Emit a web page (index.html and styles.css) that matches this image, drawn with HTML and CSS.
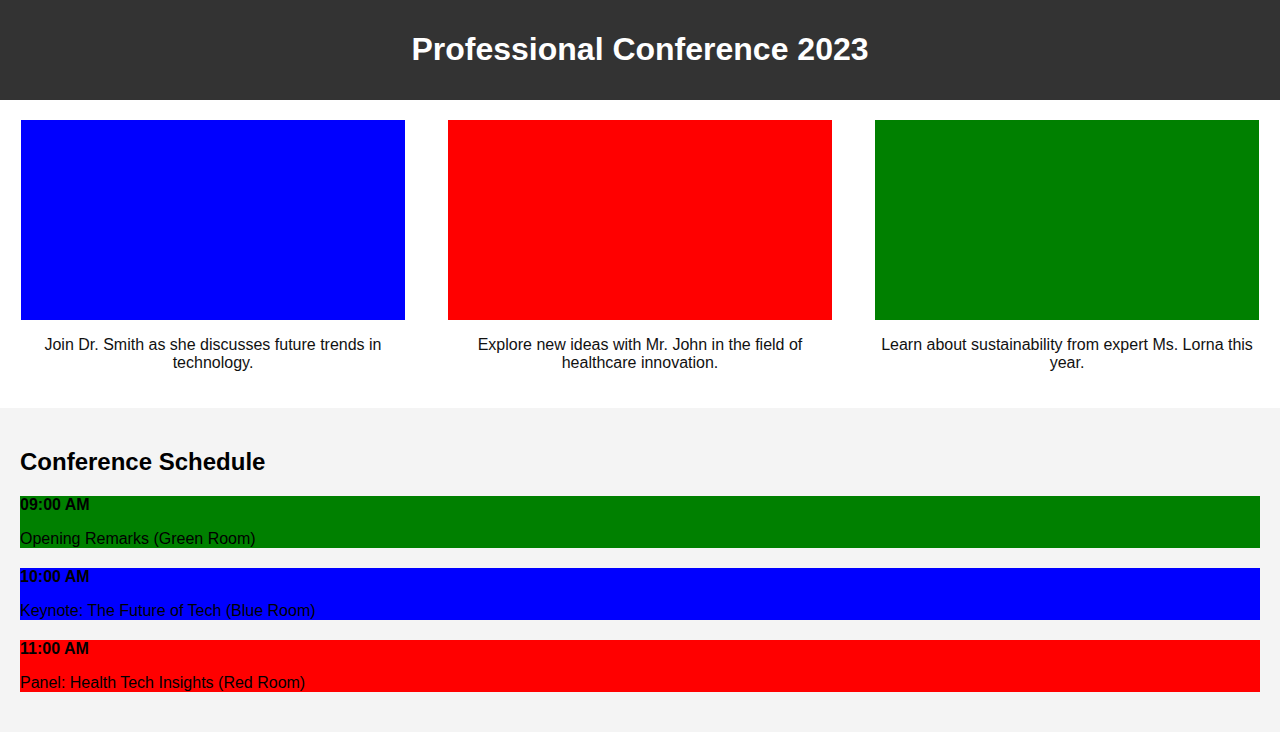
FILE: index.html
```html
<!DOCTYPE html>
<html lang="en">
<head>
<meta charset="utf-8">
<title>Professional Conference 2023</title>
<link rel="stylesheet" href="styles.css">
</head>
<body>
<header class="site-header">
  <h1 class="site-title">Professional Conference 2023</h1>
</header>
<section class="speakers">
  <div class="card">
    <div class="card-image blue"></div>
    <p class="card-text">Join Dr. Smith as she discusses future trends in technology.</p>
  </div>
  <div class="card">
    <div class="card-image red"></div>
    <p class="card-text">Explore new ideas with Mr. John in the field of healthcare innovation.</p>
  </div>
  <div class="card">
    <div class="card-image green"></div>
    <p class="card-text">Learn about sustainability from expert Ms. Lorna this year.</p>
  </div>
</section>
<section class="schedule">
  <h2 class="schedule-title">Conference Schedule</h2>
  <div class="slot green">
    <strong class="slot-time">09:00 AM</strong>
    <p class="slot-desc">Opening Remarks (Green Room)</p>
  </div>
  <div class="slot blue">
    <strong class="slot-time">10:00 AM</strong>
    <p class="slot-desc">Keynote: The Future of Tech (Blue Room)</p>
  </div>
  <div class="slot red">
    <strong class="slot-time">11:00 AM</strong>
    <p class="slot-desc">Panel: Health Tech Insights (Red Room)</p>
  </div>
</section>
</body>
</html>
```

FILE: styles.css
```css
body {
  margin: 0;
  font-family: "Liberation Sans", Arial, sans-serif;
  font-size: 16px;
  color: #000;
  background: #fff;
}

.site-header {
  background: #333;
  color: #fff;
  height: 100px;
  box-sizing: border-box;
  padding-bottom: 2px;
  display: flex;
  align-items: center;
  justify-content: center;
}

.site-title {
  margin: 0;
  font-size: 32px;
  font-weight: bold;
}

.speakers {
  display: flex;
  justify-content: space-between;
  padding: 20px 21px;
}

.card {
  width: 384px;
  text-align: center;
}

.card-image {
  height: 200px;
}

.card-text {
  margin: 16px 0;
  color: #111;
  line-height: 18px;
}

.blue { background: #0000ff; }
.red { background: #ff0000; }
.green { background: #008000; }

.schedule {
  background: #f4f4f4;
  padding: 20px;
}

.schedule-title {
  margin: 20px 0;
  font-size: 24px;
  line-height: 28px;
}

.slot {
  height: 52px;
  margin-bottom: 20px;
}

.slot-time {
  display: block;
  line-height: 18px;
}

.slot-desc {
  margin: 16px 0 0;
  line-height: 18px;
}
```
